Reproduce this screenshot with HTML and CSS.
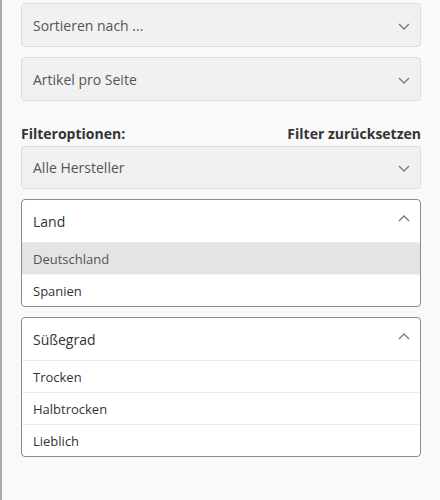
FILE: index.html
```html
<!DOCTYPE html>
<html lang="de">
<head>
<meta charset="utf-8">
<link rel="stylesheet" href="styles.css">
</head>
<body>
<div class="panel">
  <div class="select">
    <span>Sortieren nach ...</span>
    <svg class="chev" width="12" height="7" viewBox="0 0 12 7"><path d="M1 1l5 5 5-5" fill="none" stroke="#7a7a7a" stroke-width="1.4"/></svg>
  </div>
  <div class="select">
    <span>Artikel pro Seite</span>
    <svg class="chev" width="12" height="7" viewBox="0 0 12 7"><path d="M1 1l5 5 5-5" fill="none" stroke="#7a7a7a" stroke-width="1.4"/></svg>
  </div>
  <div class="filter-head">
    <span>Filteroptionen:</span>
    <span>Filter zurücksetzen</span>
  </div>
  <div class="select tight">
    <span>Alle Hersteller</span>
    <svg class="chev" width="12" height="7" viewBox="0 0 12 7"><path d="M1 1l5 5 5-5" fill="none" stroke="#7a7a7a" stroke-width="1.4"/></svg>
  </div>
  <div class="dropdown">
    <div class="dd-head">
      <span>Land</span>
      <svg class="chev up" width="12" height="7" viewBox="0 0 12 7"><path d="M1 6l5-5 5 5" fill="none" stroke="#7a7a7a" stroke-width="1.4"/></svg>
    </div>
    <div class="dd-item active">Deutschland</div>
    <div class="dd-item">Spanien</div>
  </div>
  <div class="dropdown">
    <div class="dd-head">
      <span>Süßegrad</span>
      <svg class="chev up" width="12" height="7" viewBox="0 0 12 7"><path d="M1 6l5-5 5 5" fill="none" stroke="#7a7a7a" stroke-width="1.4"/></svg>
    </div>
    <div class="dd-item">Trocken</div>
    <div class="dd-item">Halbtrocken</div>
    <div class="dd-item">Lieblich</div>
  </div>
</div>
</body>
</html>
```
FILE: styles.css
```css
html, body {
  margin: 0;
  padding: 0;
  background: #f9f9f9;
  font-family: "Open Sans", "DejaVu Sans", sans-serif;
}
.panel {
  border-left: 2px solid #a9a9a9;
  min-height: 500px;
  box-sizing: border-box;
  padding: 3px 19px 0 19px;
  width: 440px;
  display: flex;
  flex-direction: column;
}
.select {
  box-sizing: border-box;
  width: 400px;
  height: 44px;
  flex: none;
  background: #f1f1f1;
  border: 1px solid #dcdcdc;
  border-radius: 4px;
  display: flex;
  align-items: center;
  justify-content: space-between;
  padding: 0 10px 0 11px;
  font-size: 14px;
  color: #555;
  margin-bottom: 10px;
}
.select.tight {
  height: 43px;
}
.chev {
  display: block;
  margin-top: 2px;
}
.chev.up {
  margin-top: -6px;
}
.filter-head {
  width: 400px;
  display: flex;
  justify-content: space-between;
  font-size: 14px;
  font-weight: 700;
  color: #333;
  line-height: 18px;
  margin-top: 14px;
  margin-bottom: 3px;
}
.dropdown {
  box-sizing: border-box;
  width: 400px;
  flex: none;
  background: #fff;
  border: 1px solid #8c8c8c;
  border-radius: 4px;
  overflow: hidden;
  margin-bottom: 10px;
}
.dd-head {
  height: 42px;
  display: flex;
  align-items: center;
  justify-content: space-between;
  padding: 0 10px 0 11px;
  font-size: 14px;
  color: #333;
  border-bottom: 1px solid #ececec;
}
.dd-item {
  height: 31px;
  display: flex;
  align-items: center;
  padding: 0 11px;
  font-size: 13px;
  color: #333;
  border-bottom: 1px solid #ececec;
}
.dd-item:last-child {
  border-bottom: none;
}
.dd-item.active {
  background: #e4e4e4;
  color: #555;
  border-bottom-color: #f4f4f4;
}
```
